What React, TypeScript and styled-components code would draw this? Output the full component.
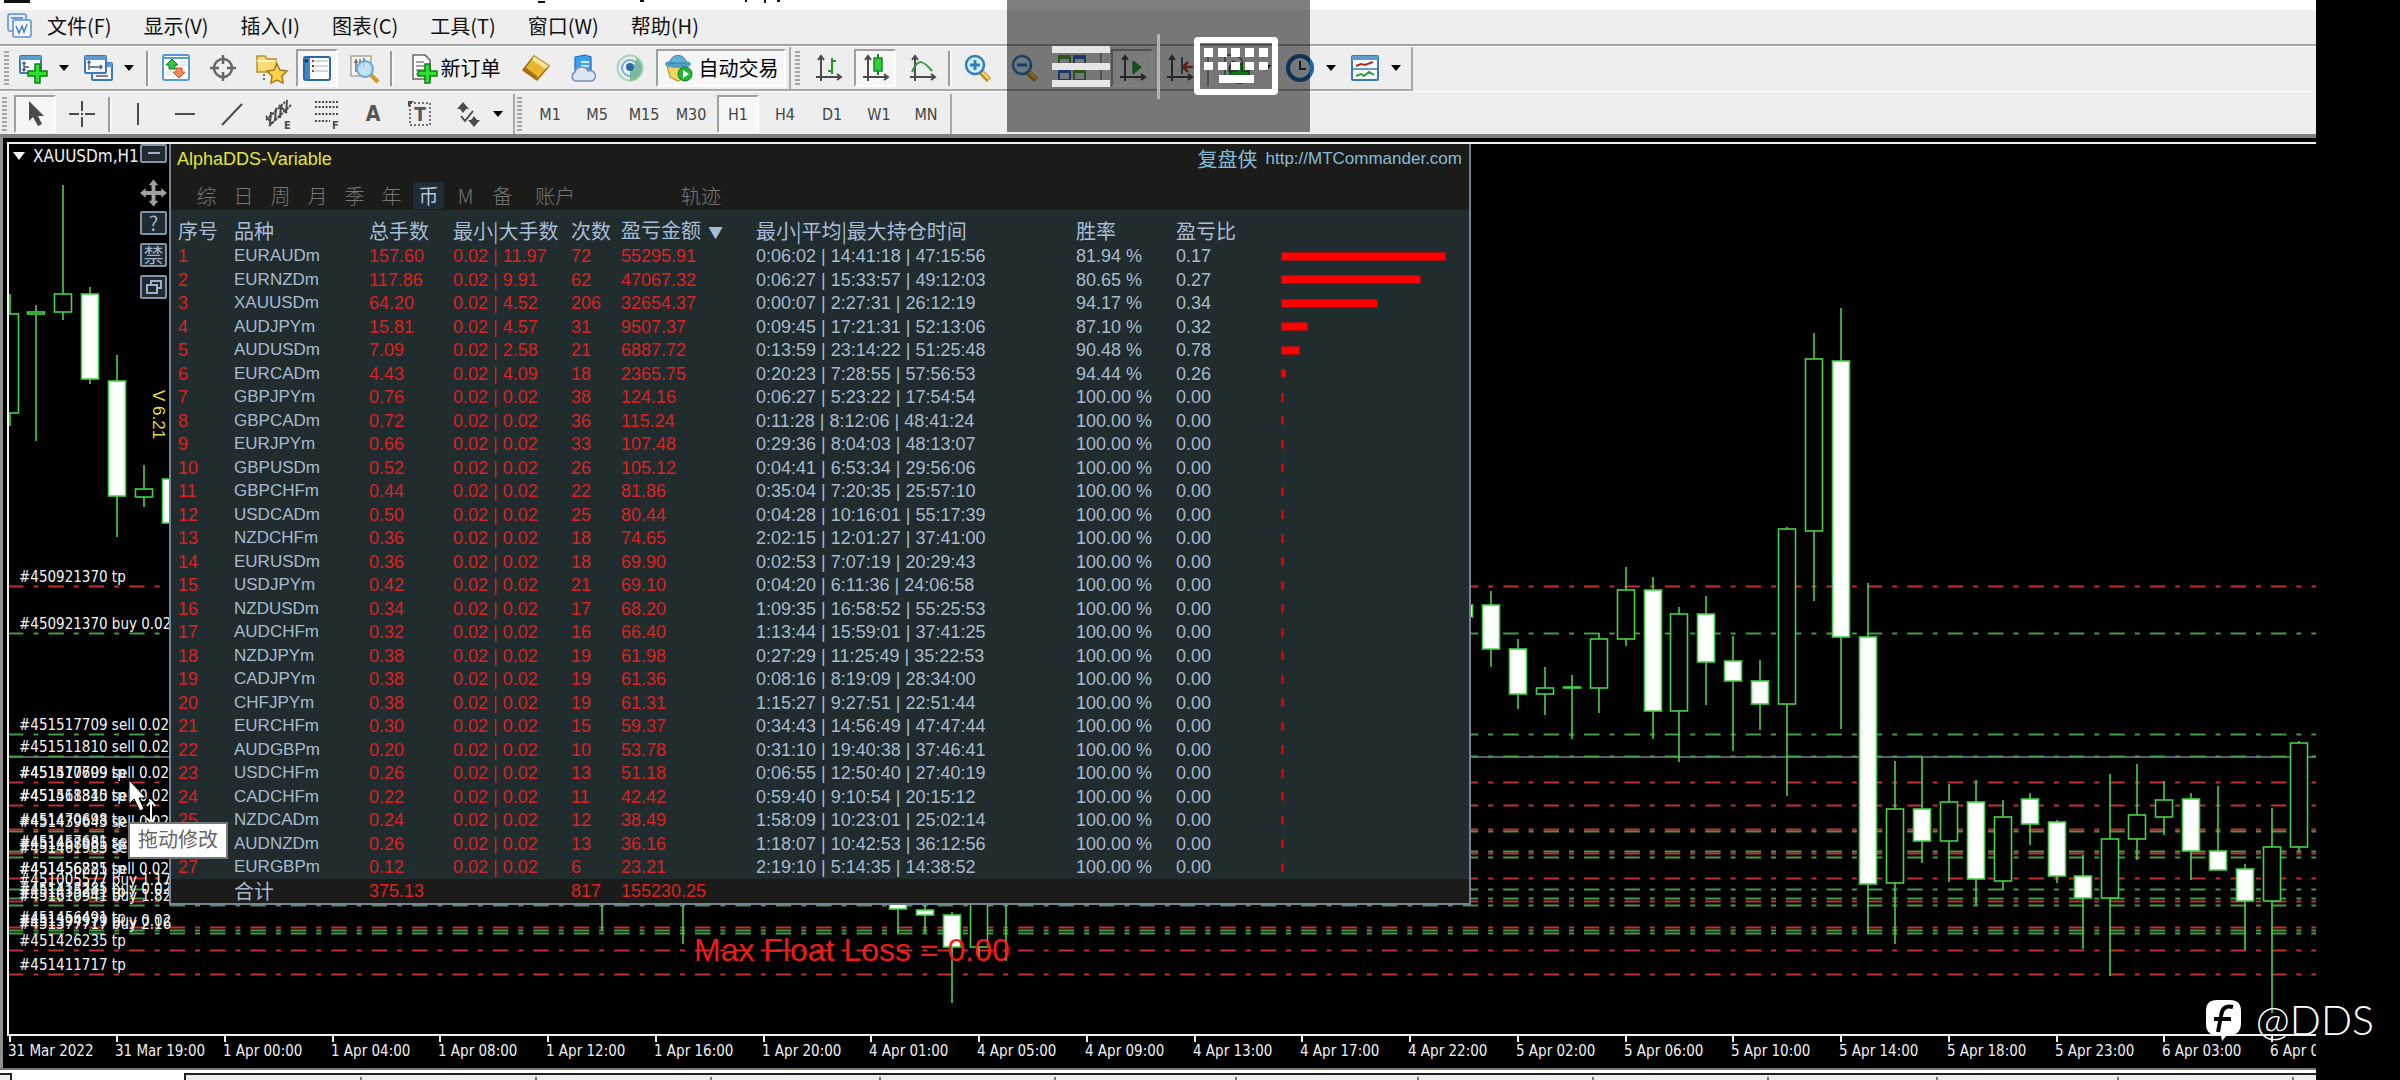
import React from "react";
import styled, { createGlobalStyle, css } from "styled-components";

const CJK = `"Noto Sans CJK SC", sans-serif`;
const UI = `"DejaVu Sans Condensed", "DejaVu Sans", ${CJK}`;
const ARIAL = `"Liberation Sans", ${CJK}`;

const GlobalStyle = createGlobalStyle`
  * { box-sizing: border-box; }
  body { margin: 0; background: #000; font-family: ${UI}; }
  button { font: inherit; color: inherit; background: none; border: 0; padding: 0; margin: 0; }
  a { color: inherit; text-decoration: none; }
`;

/* ---------- window shell ---------- */

const Screen = styled.div`
  position: relative;
  display: flex;
  height: 100vh;
  padding-right: 84px;
  background: #000;
  overflow: hidden;
`;
const Terminal = styled.div`
  flex: 1;
  min-width: 0;
  display: flex;
  flex-direction: column;
  background: #eee;
`;
const TitleStrip = styled.div`
  height: 10px;
  background: #fff;
  svg { display: block; }
`;
const MenuBar = styled.nav`
  display: flex;
  align-items: center;
  gap: 32px;
  height: 36px;
  padding: 0 0 3px 7px;
  border-bottom: 2px solid #a3a6a1;
  font: 20px/28px ${CJK};
  color: #111;
  svg { margin-right: -18px; }
`;
const Toolbar = styled.div<{ $h: number; $top?: number }>`
  display: flex;
  height: ${(p) => p.$h}px;
  padding-top: ${(p) => p.$top ?? 0}px;
  border-top: 1px solid #fbfbfb;
`;
const Group = styled.div<{ $lined?: boolean; $pad: number }>`
  display: flex;
  align-items: center;
  gap: 5px;
  padding: 0 3px 0 ${(p) => p.$pad}px;
  border-right: 2px solid #a9aba8;
  ${(p) => p.$lined && css`border-bottom: 2px solid #a9aba8;`}
`;
const Grip = styled.i`
  width: 7px;
  height: 34px;
  border-right: 2px solid transparent;
  background: repeating-linear-gradient(#a4a4a4 0 2px, #eee 2px 4px) content-box;
`;
const Sep = styled.i<{ $roomy?: boolean }>`
  width: 4px;
  height: 35px;
  margin: 0 ${(p) => (p.$roomy ? 2 : 0)}px;
  border-left: 2px solid #9c9c9c;
  border-right: 2px solid #f8f8f8;
`;
const pressed = css`
  background: #f6f6f6;
  border: 2px solid;
  border-color: #a0a0a0 #fff #fff #a0a0a0;
`;
const Tool = styled.button<{ $on?: boolean }>`
  display: flex;
  align-items: center;
  justify-content: center;
  width: 42px;
  height: 38px;
  font-size: 16px;
  color: #444;
  border: 2px solid transparent;
  ${(p) => p.$on && pressed}
`;
const WideTool = styled(Tool)<{ $w: number; $gap: number }>`
  width: ${(p) => p.$w}px;
  gap: ${(p) => p.$gap}px;
  font: 20px/28px ${CJK};
  color: #000;
  white-space: nowrap;
`;
const DropTool = styled.button<{ $push?: boolean }>`
  display: flex;
  align-items: center;
  gap: 12px;
  width: 60px;
  height: 38px;
  padding-left: 3px;
  margin-left: ${(p) => (p.$push ? 4 : 0)}px;
`;
const Caret = styled.i`
  border: 5px solid transparent;
  border-top: 6px solid #000;
  border-bottom: 0;
`;

/* ---------- chart ---------- */

const ChartFrame = styled.main`
  flex: 1;
  min-height: 0;
  display: flex;
  flex-direction: column;
  background: #000;
  border-top: 4px solid #808080;
  border-left: 3px solid #8d908c;
  padding: 4px 0 0 4px;
`;
const Plot = styled.section`
  position: relative;
  flex: 1;
  min-height: 0;
  overflow: hidden;
  border: solid #f0f0f0;
  border-width: 2px 0 0 2px;
`;
const PlotSvg = styled.svg`
  display: block;
  width: 100%;
  height: 100%;
  font-family: ${UI};
`;
const AxisSvg = styled.svg`
  display: block;
  flex: none;
  width: 100%;
  height: 34px;
  border-top: 2px solid #f0f0f0;
  font: 15px ${UI};
  fill: #f0f0f0;
`;
const TabStrip = styled.footer`
  display: flex;
  height: 12px;
  background: #fff;
  border-top: 2px solid #777;
  padding-top: 3px;
`;
const Stub = styled.i`
  width: 12px;
  border-top: 2px solid #222;
  border-right: 2px solid #222;
  background: #eee;
`;
const TabRest = styled.div`
  flex: 1;
  margin-left: 172px;
  border-top: 2px solid #222;
  border-left: 2px solid #222;
  background: #eee;
  svg { display: block; width: 100%; height: 6px; }
`;

/* ---------- statistics window ---------- */

const SideTools = styled.div`
  position: absolute;
  left: 131px;
  top: 0;
  width: 27px;
  display: flex;
  flex-direction: column;
  gap: 8px;
`;
const SideButton = styled.button<{ $h: number; $bare?: boolean }>`
  display: flex;
  align-items: center;
  justify-content: center;
  height: ${(p) => p.$h}px;
  font: 20px/20px ${CJK};
  color: #9db2c8;
  border: ${(p) => (p.$bare ? "0" : "2px solid #7f93a9")};
  border-radius: 2px;
  background: ${(p) => (p.$bare ? "none" : "#1f2b31")};
  margin: ${(p) => (p.$bare ? "8px 0 -4px" : "0")};
`;
const Version = styled.span`
  writing-mode: vertical-rl;
  margin: 83px 0 0 6px;
  font: 17px/17px ${ARIAL};
  color: #e2dc3c;
`;
const Panel = styled.section`
  position: absolute;
  left: 160px;
  top: 0;
  width: 1302px;
  border: solid #76849a;
  border-width: 0 2px 2px 2px;
  background: #202c2e;
  font-family: ${ARIAL};
  color: #a8bace;
`;
const PanelTitle = styled.header`
  display: flex;
  justify-content: space-between;
  align-items: center;
  height: 32px;
  padding: 0 7px 2px 6px;
  background: #1b1c19;
  font-size: 18px;
  color: #e4e436;
`;
const SiteLink = styled.a`
  display: flex;
  align-items: center;
  gap: 8px;
  font-size: 17px;
  color: #86bbd8;
  span { font: 20px/26px ${CJK}; }
`;
const Tabs = styled.div`
  display: flex;
  align-items: center;
  height: 34px;
  padding: 4px 0 0 17px;
  background: #1b1c19;
`;
const Tab = styled.button<{ $on?: boolean; $w?: number; $ml?: number }>`
  width: ${(p) => p.$w ?? 31}px;
  height: 27px;
  margin: 0 3px;
  margin-left: ${(p) => p.$ml ?? 3}px;
  border-radius: 3px;
  font: ${(p) => (p.$on ? 400 : 300)} 20px/27px ${CJK};
  white-space: nowrap;
  color: ${(p) => (p.$on ? "#b0c4de" : "#777773")};
  background: ${(p) => (p.$on ? "#202c36" : "none")};
`;
const Stats = styled.table`
  width: 100%;
  table-layout: fixed;
  border-collapse: collapse;
  font-size: 18px;
  line-height: 20px;
  text-align: left;
  th, td { padding: 0; white-space: nowrap; font-weight: 400; }
  th:first-child, td:first-child { padding-left: 7px; }
  thead th { height: 34px; padding-top: 8px; font: 20px/24px ${CJK}; color: #a8bcd6; }
  tbody tr { height: 23px; }
  tbody tr:nth-child(odd) { height: 24px; }
  tfoot tr { height: 24px; background: #1b1c19; }
  tfoot th { font: 20px/22px ${CJK}; }
`;
const SortMark = styled.span`
  margin-left: 7px;
  font-size: 15px;
`;
const Red = styled.td`
  color: #dc2222;
`;
const Symbol = styled.td`
  font-size: 17px;
`;
const Bar = styled.i`
  display: block;
  height: 9px;
  background: #ff0000;
  border: 1px solid #981414;
`;
const Tooltip = styled.div`
  position: absolute;
  left: 119px;
  top: 678px;
  padding: 2px 8px 5px;
  border: 2px solid #777;
  background: #fff;
  font: 20px/26px ${CJK};
  color: #666;
`;
const Pointer = styled.svg`
  position: absolute;
  left: 119px;
  top: 635px;
`;

/* ---------- screen overlays ---------- */

const RemoteBar = styled.div`
  position: absolute;
  left: 1007px;
  top: 0;
  width: 303px;
  height: 132px;
  display: flex;
  align-items: center;
  padding-left: 45px;
  background: rgba(0, 0, 0, 0.5);
`;
const Burger = styled.button`
  display: flex;
  flex-direction: column;
  gap: 10px;
  width: 58px;
  i { height: 7px; background: #e6e6e6; }
`;
const Rule = styled.i`
  width: 3px;
  height: 65px;
  margin: 0 34px 0 47px;
  background: #b4b4b4;
`;
const Watermark = styled.div`
  position: absolute;
  right: 26px;
  bottom: 36px;
  display: flex;
  align-items: center;
  gap: 14px;
  font: 300 41px/48px Lato, sans-serif;
  color: #fff;
`;

/* ---------- icons ---------- */

const G = "#4b4b4b";
const axes = (
  <g stroke={G} strokeWidth="2" fill="none">
    <path d="M7 3V27M2 23H26M4 6l3-4 3 4M23 20l4 3-4 3" />
  </g>
);
const win = (x: number, y: number, w: number, h: number) => (
  <g>
    <rect x={x} y={y} width={w} height={h} rx="1" fill="#f4f9fd" stroke="#3d7ab5" strokeWidth="2" />
    <rect x={x} y={y} width={w} height="4" fill="#5d9ad2" />
  </g>
);
const plus = <path d="M16 10h5v7h7v5h-7v7h-5v-7h-7v-5h7z" fill="#2fe02f" stroke="#0b7d16" strokeWidth="1.5" />;
const lens = (sign: string, c = "#2f80c2") => (
  <g>
    <path d="M17 18l8 8" stroke="#b58a1c" strokeWidth="6" />
    <path d="M18 18l7 7" stroke="#f2cf5b" strokeWidth="3" />
    <circle cx="11" cy="11" r="9" fill="#d8effc" stroke={c} strokeWidth="2.5" />
    <path d={sign} stroke={c} strokeWidth="3" />
  </g>
);
const sheet = <path d="M4 1h12l5 5v19H4z" fill="#fafafa" stroke="#666" strokeWidth="1.5" />;

const art: Record<string, React.ReactNode> = {
  newChart: <>{win(1, 2, 21, 17)}<path d="M5 8v9M5 13h5M3.5 10L5 8l1.500 2M3.500 15L5 17l1.500-2" stroke="#557" fill="none" strokeWidth="1.3" />{plus}</>,
  profiles: <>{win(8, 9, 20, 17)}{win(1, 2, 21, 17)}<path d="M5 7v9M5 13h13M3.500 9L5 7l1.500 2M16 11l2 2-2 2M12 22h12" stroke="#557" fill="none" strokeWidth="1.3" /></>,
  market: (
    <>
      <rect x="1" y="1" width="26" height="25" rx="2" fill="#fff" stroke="#5b9bd2" strokeWidth="2" />
      <path d="M1 4h26" stroke="#5b9bd2" strokeWidth="2" />
      <path d="M10 5l6 6h-3v4H7v-4H4z" fill="#3cc04a" stroke="#127a20" />
      <path d="M17 24l-6-6h3v-4h6v4h3z" fill="#f98a5c" stroke="#d8481c" />
      <path d="M18 8h7M18 11h7M4 18h5M4 21h5" stroke="#c6d4e2" />
    </>
  ),
  target: <g stroke="#666" strokeWidth="2.5" fill="none"><circle cx="14" cy="14" r="9" /><path d="M14 1v9M14 18v9M1 14h9M18 14h9" /></g>,
  favs: (
    <>
      <path d="M1 2h8l2 3h9v13H1z" fill="#f8dc78" stroke="#b8902a" strokeWidth="1.5" />
      <path d="M1 7h19" stroke="#fff2b8" strokeWidth="2" />
      <path d="M8 20v8" stroke="#444" strokeWidth="1.5" strokeDasharray="2 2" />
      <path d="M21 10l3 6 7 1-5 5 1 7-6-3-6 3 1-7-5-5 7-1z" fill="#fbd34a" stroke="#a87818" strokeWidth="1.5" />
    </>
  ),
  panel: (
    <>
      <rect x="1" y="3" width="26" height="23" rx="2" fill="#fff" stroke="#2b68a8" strokeWidth="2" />
      <rect x="2" y="4" width="5" height="21" fill="#3f86cc" />
      <path d="M2 7h3" stroke="#12345c" strokeWidth="3" />
      <path d="M12 7h13M12 12h13M12 17h13" stroke="#9db4cc" strokeWidth="1.2" />
      <path d="M9 7h2M9 17h2" stroke="#d03030" strokeWidth="2" /><path d="M9 12h2" stroke="#333" strokeWidth="2" />
    </>
  ),
  tester: <><path d="M1 2h20v20H1z" fill="#f8f5ea" stroke="#a9a79c" strokeWidth="1.5" /><path d="M6 5v13M10 5v8M14 4v10M4 8h4M12 8h5" stroke="#666" strokeWidth="1.5" /><path d="M20 20l8 8" stroke="#c99a2c" strokeWidth="4" /><circle cx="15" cy="15" r="8" fill="#b9dff8" fillOpacity=".85" stroke="#6aa8d6" strokeWidth="2" /></>,
  order: <>{sheet}<path d="M7 8h8M7 12h11M7 16h11M7 20h6" stroke="#888" strokeWidth="1.5" />{plus}</>,
  gold: <><path d="M1 16L12 2l15 10-12 14z" fill="#e9b52f" stroke="#9c6c12" strokeWidth="1.5" /><path d="M12 2l15 10-4 3L10 6z" fill="#ffe390" /><path d="M1 16l14 10v-4L3 13z" fill="#a56d14" /></>,
  cloud: <><path d="M6 3l10-2 6 2v15H6z" fill="#3ba0ee" stroke="#1c70c0" strokeWidth="1.2" /><path d="M12 8h8M12 12h8" stroke="#d5ecff" strokeWidth="2" /><path d="M6 27a5 5 0 010-9 7 7 0 0113-1 5 5 0 014 10z" fill="#dde4f2" stroke="#7f90b8" strokeWidth="1.5" /></>,
  signal: (
    <g fill="none">
      <circle cx="14" cy="14" r="12.5" fill="#e6f2ea" stroke="#a9d0b8" strokeWidth="2" />
      <path d="M14 14v13a13 13 0 0012-13 12 12 0 00-6-10 9 9 0 01-6 10z" fill="#7cc089" />
      <circle cx="14" cy="14" r="8" stroke="#7fa9d0" strokeWidth="2" />
      <circle cx="14" cy="13" r="4" fill="#2e68b0" />
    </g>
  ),
  robot: <><path d="M3 12h21l-3 11-7 4-8-4z" fill="#f5d661" stroke="#b8962c" strokeWidth="1.2" /><ellipse cx="14" cy="10" rx="13" ry="4" fill="#4f9fc7" /><path d="M6 9c0-10 16-10 16 0z" fill="#62b2d8" stroke="#2f7ca8" /><circle cx="21" cy="20" r="7" fill="#25b43a" stroke="#0d7d20" /><path d="M19 16l6 4-6 4z" fill="#fff" /></>,
  bars: <>{axes}<path d="M18 4v16M18 7h4M14 17h4" stroke="#23962c" strokeWidth="2" /></>,
  candles: <>{axes}<path d="M17 0v21" stroke="#128a1e" strokeWidth="2" /><rect x="13" y="4" width="8" height="13" fill="#2fd03c" stroke="#128a1e" strokeWidth="1.5" /></>,
  line: <>{axes}<path d="M4 18c6-14 11-12 20-1" stroke="#2f9c3a" fill="none" strokeWidth="2" /></>,
  zoomIn: lens("M11 6v10M6 11h10"),
  zoomOut: lens("M6 11h10"),
  tiles: <><path d="M0 1h13v12H0z" fill="#58a42c" /><path d="M15 1h13v12H15z" fill="#3a70c8" /><path d="M0 15h13v12H0z" fill="#3a70c8" /><path d="M15 15h13v12H15z" fill="#58a42c" /><path d="M2 5h9v6H2zM17 5h9v6h-9zM2 19h9v6H2zM17 19h9v6h-9z" fill="#e9eef6" /></>,
  scroll: <>{axes}<path d="M15 7l8 6-8 7z" fill="#23a832" stroke="#0e7a1c" /></>,
  shift: <>{axes}<path d="M17 3v17" stroke="#2c6fa8" strokeWidth="2" /><path d="M28 13h-9M23 8l-5 5 5 5" stroke="#c03c1c" strokeWidth="2.5" fill="none" /></>,
  indicator: <>{sheet}<path d="M8 18c2-12 5-12 6-8" stroke="#555" fill="none" strokeWidth="2" />{plus}</>,
  clock: <><circle cx="14" cy="14" r="12" fill="#e8f2fa" stroke="#1f63a8" strokeWidth="4" /><path d="M14 7v8h6" stroke="#333" strokeWidth="2" fill="none" /></>,
  template: <>{win(1, 2, 26, 24)}<path d="M2 15h24" stroke="#3d7ab5" strokeWidth="1.5" /><path d="M5 12l5-2 4 1 8-3" stroke="#a83020" strokeWidth="2" fill="none" /><path d="M5 22l5-2 3 2 5-4 5 3" stroke="#2f9c3a" strokeWidth="2" fill="none" /></>,
  arrow: <path d="M8 1v20l4-4 5 9 4-2-4-8h6z" fill="#4a4a4a" />,
  cross: <path d="M14 1v10M14 17v10M1 14h10M17 14h10M13 14h2" stroke={G} strokeWidth="2" />,
  vline: <path d="M14 3v22" stroke={G} strokeWidth="2" />,
  hline: <path d="M4 14h20" stroke={G} strokeWidth="2" />,
  trend: <path d="M4 25L24 4" stroke={G} strokeWidth="2" />,
  channel: <><path d="M1 20L20 2M4 26L26 5" stroke={G} strokeWidth="2" strokeDasharray="3 1" /><path d="M6 12l-1 12M11 8l-1 13M16 5l-1 13M22 0l-1 13M1 16l6 8M14 5l8 8" stroke={G} strokeWidth="2" /><text x="19" y="29" fontSize="11" fontWeight="700" fill={G}>E</text></>,
  fibo: <><path d="M3 2h24M3 7h24M3 14h24M3 21h15" stroke={G} strokeWidth="2" strokeDasharray="2 1.5" /><text x="20" y="29" fontSize="11" fontWeight="700" fill={G}>F</text></>,
  textA: <text x="14" y="21" textAnchor="middle" fontSize="21" fontWeight="700" fill="#555">A</text>,
  label: <><rect x="4" y="3" width="20" height="22" fill="none" stroke={G} strokeWidth="1.5" strokeDasharray="2 2" /><path d="M2 1h6l-6 6z" fill={G} /><text x="14" y="21" textAnchor="middle" fontSize="19" fontWeight="700" fill="#555">T</text></>,
  arrows: <><path d="M10 2l6 7h-3l-3 4-3-4H4zM21 27l-6-7h3l3-4 3 4h3z" fill={G} /><path d="M8 16l4 5 8-10" stroke={G} strokeWidth="2" fill="none" /></>,
};
const Icon = ({ n }: { n: string }) => (
  <svg width="28" height="28" viewBox="0 0 28 28" overflow="visible" aria-hidden="true">{art[n]}</svg>
);
const Btn = ({ n, on }: { n: string; on?: boolean }) => (
  <Tool $on={on} aria-label={n}><Icon n={n} /></Tool>
);
const Drop = ({ n, push }: { n: string; push?: boolean }) => (
  <DropTool $push={push} aria-label={n}><Icon n={n} /><Caret /></DropTool>
);

/* ---------- data ---------- */

const menus = ["文件(F)", "显示(V)", "插入(I)", "图表(C)", "工具(T)", "窗口(W)", "帮助(H)"];
const frames = ["M1", "M5", "M15", "M30", "H1", "H4", "D1", "W1", "MN"];

const rows = `EURAUDm,157.60,0.02 | 11.97,72,55295.91,0:06:02 | 14:41:18 | 47:15:56,81.94 %,0.17
EURNZDm,117.86,0.02 | 9.91,62,47067.32,0:06:27 | 15:33:57 | 49:12:03,80.65 %,0.27
XAUUSDm,64.20,0.02 | 4.52,206,32654.37,0:00:07 | 2:27:31 | 26:12:19,94.17 %,0.34
AUDJPYm,15.81,0.02 | 4.57,31,9507.37,0:09:45 | 17:21:31 | 52:13:06,87.10 %,0.32
AUDUSDm,7.09,0.02 | 2.58,21,6887.72,0:13:59 | 23:14:22 | 51:25:48,90.48 %,0.78
EURCADm,4.43,0.02 | 4.09,18,2365.75,0:20:23 | 7:28:55 | 57:56:53,94.44 %,0.26
GBPJPYm,0.76,0.02 | 0.02,38,124.16,0:06:27 | 5:23:22 | 17:54:54,100.00 %,0.00
GBPCADm,0.72,0.02 | 0.02,36,115.24,0:11:28 | 8:12:06 | 48:41:24,100.00 %,0.00
EURJPYm,0.66,0.02 | 0.02,33,107.48,0:29:36 | 8:04:03 | 48:13:07,100.00 %,0.00
GBPUSDm,0.52,0.02 | 0.02,26,105.12,0:04:41 | 6:53:34 | 29:56:06,100.00 %,0.00
GBPCHFm,0.44,0.02 | 0.02,22,81.86,0:35:04 | 7:20:35 | 25:57:10,100.00 %,0.00
USDCADm,0.50,0.02 | 0.02,25,80.44,0:04:28 | 10:16:01 | 55:17:39,100.00 %,0.00
NZDCHFm,0.36,0.02 | 0.02,18,74.65,2:02:15 | 12:01:27 | 37:41:00,100.00 %,0.00
EURUSDm,0.36,0.02 | 0.02,18,69.90,0:02:53 | 7:07:19 | 20:29:43,100.00 %,0.00
USDJPYm,0.42,0.02 | 0.02,21,69.10,0:04:20 | 6:11:36 | 24:06:58,100.00 %,0.00
NZDUSDm,0.34,0.02 | 0.02,17,68.20,1:09:35 | 16:58:52 | 55:25:53,100.00 %,0.00
AUDCHFm,0.32,0.02 | 0.02,16,66.40,1:13:44 | 15:59:01 | 37:41:25,100.00 %,0.00
NZDJPYm,0.38,0.02 | 0.02,19,61.98,0:27:29 | 11:25:49 | 35:22:53,100.00 %,0.00
CADJPYm,0.38,0.02 | 0.02,19,61.36,0:08:16 | 8:19:09 | 28:34:00,100.00 %,0.00
CHFJPYm,0.38,0.02 | 0.02,19,61.31,1:15:27 | 9:27:51 | 22:51:44,100.00 %,0.00
EURCHFm,0.30,0.02 | 0.02,15,59.37,0:34:43 | 14:56:49 | 47:47:44,100.00 %,0.00
AUDGBPm,0.20,0.02 | 0.02,10,53.78,0:31:10 | 19:40:38 | 37:46:41,100.00 %,0.00
USDCHFm,0.26,0.02 | 0.02,13,51.18,0:06:55 | 12:50:40 | 27:40:19,100.00 %,0.00
CADCHFm,0.22,0.02 | 0.02,11,42.42,0:59:40 | 9:10:54 | 20:15:12,100.00 %,0.00
NZDCADm,0.24,0.02 | 0.02,12,38.49,1:58:09 | 10:23:01 | 25:02:14,100.00 %,0.00
AUDNZDm,0.26,0.02 | 0.02,13,36.16,1:18:07 | 10:42:53 | 36:12:56,100.00 %,0.00
EURGBPm,0.12,0.02 | 0.02,6,23.21,2:19:10 | 5:14:35 | 14:38:52,100.00 %,0.00`
  .split("\n")
  .map((r) => r.split(","));
const topProfit = Number(rows[0][4]);
const barWidth = (profit: string) => Math.max(3, Math.round((Number(profit) / topProfit) * 167) - 2);

const colWidths = [63, 135, 84, 118, 50, 135, 320, 100, 105];

// [y, colour, labels] in screen pixels; r = target, g = open order
const levels: [number, "r" | "g", string[]][] = [
  [586, "r", ["#450921370 tp"]],
  [633, "g", ["#450921370 buy 0.02"]],
  [734, "g", ["#451517709 sell 0.02"]],
  [756, "g", ["#451511810 sell 0.02"]],
  [782, "r", ["#451517709 tp", "#451470699 sell 0.02"]],
  [805, "r", ["#451511810 tp", "#451468345 sell 0.02"]],
  [831, "g", ["#451439643 sell 0.02"]],
  [829, "r", ["#451470698 tp"]],
  [851, "g", ["#451457681 sell 0.02"]],
  [853, "r", ["#451468985 tp"]],
  [857, "g", ["#451461985 sell 0.02"]],
  [878, "r", ["#451456221 tp", "#451456885 sell 0.02"]],
  [889, "g", ["#451005577 buy 1.17"]],
  [898, "g", ["#451413285 buy 0.02"]],
  [901, "r", ["#451435241 tp"]],
  [905, "g", ["#451610941 buy 1.82"]],
  [927, "r", ["#451456491 tp"]],
  [930, "g", ["#451394979 buy 0.02"]],
  [933, "g", ["#451377717 buy 2.16"]],
  [950, "r", ["#451426235 tp"]],
  [974, "r", ["#451411717 tp"]],
];

// [index, high, body top, body bottom, low, falling]
const candles: [number, number, number, number, number, 0 | 1][] = [
  [0, 294, 314, 413, 426, 0], [1, 305, 312, 314, 441, 0], [2, 185, 294, 312, 320, 0], [3, 287, 294, 379, 384, 1],
  [4, 355, 381, 496, 537, 1], [5, 465, 489, 497, 507, 0], [6, 479, 479, 523, 523, 1],
  [22, 880, 880, 890, 930, 0], [25, 880, 880, 890, 944, 0], [33, 880, 890, 909, 933, 1], [34, 880, 910, 915, 933, 1],
  [35, 912, 915, 947, 1003, 1], [36, 880, 880, 947, 958, 0], [37, 870, 870, 880, 961, 0],
  [54, 605, 605, 617, 617, 1], [55, 591, 605, 649, 667, 1], [56, 639, 649, 694, 709, 1], [57, 667, 688, 694, 715, 0],
  [58, 675, 687, 688, 739, 0], [59, 633, 639, 688, 713, 0], [60, 567, 590, 639, 646, 0], [61, 577, 590, 711, 739, 1],
  [62, 607, 614, 711, 762, 0], [63, 596, 614, 662, 705, 1], [64, 636, 661, 681, 751, 1], [65, 660, 681, 704, 730, 1],
  [66, 527, 529, 704, 796, 0], [67, 333, 359, 531, 601, 0], [68, 308, 361, 637, 729, 1], [69, 583, 637, 884, 933, 1],
  [70, 761, 809, 883, 944, 0], [71, 757, 809, 841, 863, 1], [72, 784, 802, 841, 882, 0], [73, 780, 802, 879, 905, 1],
  [74, 800, 817, 881, 890, 0], [75, 793, 799, 824, 845, 1], [76, 820, 822, 876, 883, 1], [77, 855, 876, 898, 949, 1],
  [78, 774, 839, 898, 976, 0], [79, 764, 815, 839, 860, 0], [80, 781, 800, 817, 835, 0], [81, 793, 799, 851, 880, 1],
  [82, 786, 851, 870, 870, 1], [83, 864, 869, 901, 950, 1], [84, 808, 847, 901, 1013, 0], [85, 741, 743, 847, 851, 0],
];
const candleX = (k: number) => Math.round(9.5 + k * 26.935);

const times = [
  "31 Mar 2022", "31 Mar 19:00", "1 Apr 00:00", "1 Apr 04:00", "1 Apr 08:00", "1 Apr 12:00", "1 Apr 16:00", "1 Apr 20:00",
  "4 Apr 01:00", "4 Apr 05:00", "4 Apr 09:00", "4 Apr 13:00", "4 Apr 17:00", "4 Apr 22:00", "5 Apr 02:00", "5 Apr 06:00",
  "5 Apr 10:00", "5 Apr 14:00", "5 Apr 18:00", "5 Apr 23:00", "6 Apr 03:00", "6 Apr 07:00",
];
const tabMarks = [361, 536, 711, 880, 1055, 1236, 1418, 1593, 1768, 1937, 2118, 2293];

/* ---------- parts ---------- */

const Drawing = () => (
  <PlotSvg role="img" aria-label="XAUUSDm H1">
    <g transform="translate(-9 -144)">
      <path d="M8 757H2400" stroke="#565e6c" strokeWidth="2" />
      {levels.map(([y, c]) => (
        <path key={y} d={`M8 ${y + 0.5}H2400`} stroke={c === "r" ? "#c03030" : "#459a45"} strokeWidth="2" strokeDasharray="15.41 10 5 10" />
      ))}
      {candles.map(([k, hi, top, bot, lo, down]) => {
        const x = candleX(k);
        return (
          <g key={k} stroke="#45d345" strokeWidth="1.6">
            <path d={`M${x} ${hi}V${lo}`} />
            <rect x={x - 8.5} y={top} width="17" height={bot - top} fill={down ? "#fff" : "#000"} />
          </g>
        );
      })}
      <g fontSize="15" fill="#f4f4f4">
        {levels.flatMap(([y, , names]) => names.map((t) => <text key={t + y} x="19" y={y - 4}>{t}</text>))}
      </g>
      <path d="M13 152h12l-6 8z" fill="#fff" />
      <text x="33" y="162" fontSize="17" fill="#f0f0f0">XAUUSDm,H1</text>
      <text x="694" y="961" fontSize="32" fill="#f01c14" fontFamily="Liberation Sans, sans-serif">Max Float Loss = 0.00</text>
    </g>
  </PlotSvg>
);

const StatsPanel = () => (
  <Panel>
    <PanelTitle>
      AlphaDDS-Variable
      <SiteLink href="#"><span>复盘侠</span>http://MTCommander.com</SiteLink>
    </PanelTitle>
    <Tabs>
      {["综", "日", "周", "月", "季", "年", "币", "M", "备"].map((t) => <Tab key={t} $on={t === "币"}>{t}</Tab>)}
      <Tab $w={40} $ml={14}>账户</Tab>
      <Tab $w={40} $ml={103}>轨迹</Tab>
    </Tabs>
    <Stats>
      <colgroup>
        {colWidths.map((w, i) => <col key={i} style={{ width: w }} />)}
        <col />
      </colgroup>
      <thead>
        <tr>
          {["序号", "品种", "总手数", "最小|大手数", "次数"].map((h) => <th key={h}>{h}</th>)}
          <th>盈亏金额<SortMark>▼</SortMark></th>
          {["最小|平均|最大持仓时间", "胜率", "盈亏比", ""].map((h) => <th key={h}>{h}</th>)}
        </tr>
      </thead>
      <tbody>
        {rows.map(([sym, lots, range, n, profit, hold, rate, ratio], i) => (
          <tr key={sym}>
            <Red>{i + 1}</Red>
            <Symbol>{sym}</Symbol>
            <Red>{lots}</Red>
            <Red>{range}</Red>
            <Red>{n}</Red>
            <Red>{profit}</Red>
            <td>{hold}</td>
            <td>{rate}</td>
            <td>{ratio}</td>
            <td><Bar style={{ width: barWidth(profit) }} /></td>
          </tr>
        ))}
      </tbody>
      <tfoot>
        <tr>
          <td />
          <th>合计</th>
          <Red>375.13</Red>
          <td />
          <Red>817</Red>
          <Red>155230.25</Red>
          <td colSpan={4} />
        </tr>
      </tfoot>
    </Stats>
  </Panel>
);

const keyXs = [10, 24, 37, 51, 65];

export default function App() {
  return (
    <Screen>
      <GlobalStyle />
      <Terminal>
        <TitleStrip>
          <svg width="820" height="4" aria-hidden="true">
            <path d="M4 0h26v3H4zM538 1h7v2h-7zM640 0h4v2h-4zM745 0h2v2h-2zM764 0h2v3h-2zM777 0h3v2h-3z" fill="#111" />
          </svg>
        </TitleStrip>
        <MenuBar>
          <svg width="26" height="26" viewBox="0 0 26 26" aria-hidden="true">
            <rect x="1" y="1" width="18" height="17" rx="2" fill="#e6effa" stroke="#5b8fd0" strokeWidth="1.5" />
            <rect x="6" y="7" width="18" height="17" rx="2" fill="#f4f8fd" stroke="#5b8fd0" strokeWidth="1.5" />
            <path d="M4 5h12M9 13l3 7 3-7 2 6 3-8" stroke="#4a7fc6" strokeWidth="1.5" fill="none" />
          </svg>
          {menus.map((m) => <button key={m}>{m}</button>)}
        </MenuBar>
        <Toolbar $h={45}>
          <Group $lined $pad={4}>
            <Grip />
            <Drop n="newChart" />
            <Drop n="profiles" />
            <Sep />
            <Btn n="market" />
            <Btn n="target" />
            <Btn n="favs" />
            <Btn n="panel" on />
            <Btn n="tester" />
            <Sep />
            <WideTool $w={111} $gap={4}><Icon n="order" />新订单</WideTool>
            <Btn n="gold" />
            <Btn n="cloud" />
            <Btn n="signal" />
            <WideTool $on $w={130} $gap={7}><Icon n="robot" />自动交易</WideTool>
          </Group>
          <Group $lined $pad={4}>
            <Grip />
            <Btn n="bars" />
            <Btn n="candles" on />
            <Btn n="line" />
            <Sep />
            <Btn n="zoomIn" />
            <Btn n="zoomOut" />
            <Btn n="tiles" />
            <Sep $roomy />
            <Btn n="scroll" on />
            <Btn n="shift" />
            <Sep $roomy />
            <Drop n="indicator" />
            <Drop n="clock" />
            <Drop n="template" />
          </Group>
        </Toolbar>
        <Toolbar $h={43} $top={2}>
          <Group $pad={2}>
            <Grip />
            <Btn n="arrow" on />
            <Btn n="cross" />
            <Sep />
            <Btn n="vline" />
            <Btn n="hline" />
            <Btn n="trend" />
            <Btn n="channel" />
            <Btn n="fibo" />
            <Btn n="textA" />
            <Btn n="label" />
            <Drop n="arrows" push />
          </Group>
          <Group $pad={2}>
            <Grip />
            {frames.map((f) => <Tool key={f} $on={f === "H1"}>{f}</Tool>)}
          </Group>
        </Toolbar>
        <ChartFrame>
          <Plot>
            <Drawing />
            <SideTools>
              <SideButton $h={19} aria-label="collapse">
                <svg width="12" height="3"><path d="M0 1h12" stroke="#9db2c8" strokeWidth="2" /></svg>
              </SideButton>
              <SideButton $h={28} $bare aria-label="move">
                <svg width="28" height="28" viewBox="0 0 28 28">
                  <path d="M14 0l5 6h-3v6h6V9l6 5-6 5v-3h-6v6h3l-5 6-5-6h3v-6H6v3l-6-5 6-5v3h6V6H9z" fill="#a0a0a0" />
                </svg>
              </SideButton>
              <SideButton $h={24}>?</SideButton>
              <SideButton $h={24}>禁</SideButton>
              <SideButton $h={24} aria-label="restore">
                <svg width="16" height="14" fill="none" stroke="#9db2c8" strokeWidth="2">
                  <path d="M5 5V1h10v7h-4M1 5h10v8H1z" />
                </svg>
              </SideButton>
              <Version>V 6.21</Version>
            </SideTools>
            <StatsPanel />
            <Pointer width="34" height="46" viewBox="0 0 34 46" aria-hidden="true">
              <path d="M1 1v24l5-5 6 12 4-2-5-11h7z" fill="#fff" stroke="#000" />
              <path d="M23 24v18M19 27l4-5 4 5M19 39l4 5 4-5" stroke="#fff" strokeWidth="2" fill="none" />
            </Pointer>
            <Tooltip role="tooltip">拖动修改</Tooltip>
          </Plot>
          <AxisSvg>
            {times.map((t, i) => {
              const x = candleX(i * 4) - 7;
              return (
                <g key={t}>
                  <path d={`M${x} 0v6`} stroke="#f0f0f0" strokeWidth="2" />
                  <text x={x - 2} y="20">{t}</text>
                </g>
              );
            })}
          </AxisSvg>
        </ChartFrame>
        <TabStrip>
          <Stub />
          <TabRest>
            <svg aria-hidden="true">
              {tabMarks.map((x) => <path key={x} d={`M${x - 186} 2v4`} stroke="#777" strokeWidth="2" />)}
            </svg>
          </TabRest>
        </TabStrip>
      </Terminal>
      <RemoteBar>
        <Burger aria-label="menu"><i /><i /><i /></Burger>
        <Rule />
        <button aria-label="keyboard">
          <svg width="84" height="58" viewBox="0 0 84 58" display="block">
            <rect x="3" y="3" width="78" height="52" rx="1" fill="none" stroke="#fff" strokeWidth="6" />
            <g fill="#fff">
              {keyXs.map((x) => <path key={x} d={`M${x} 11h9v9h-9zM${x} 25h9v8h-9z`} />)}
              <path d="M25 38h35v8H25z" />
            </g>
          </svg>
        </button>
      </RemoteBar>
      <Watermark>
        <svg width="37" height="42" viewBox="0 0 37 42" aria-hidden="true">
          <path d="M12 1h13q11 0 11 11v13q0 10-10 11h-4l-5 6-1-6h-4Q1 36 1 25V12Q1 1 12 1z" fill="#fff" />
          <path d="M28 8c-8-2-11 2-12 9l-3 16M9 20h17" stroke="#000" strokeWidth="4" fill="none" />
        </svg>
        @DDS
      </Watermark>
    </Screen>
  );
}
